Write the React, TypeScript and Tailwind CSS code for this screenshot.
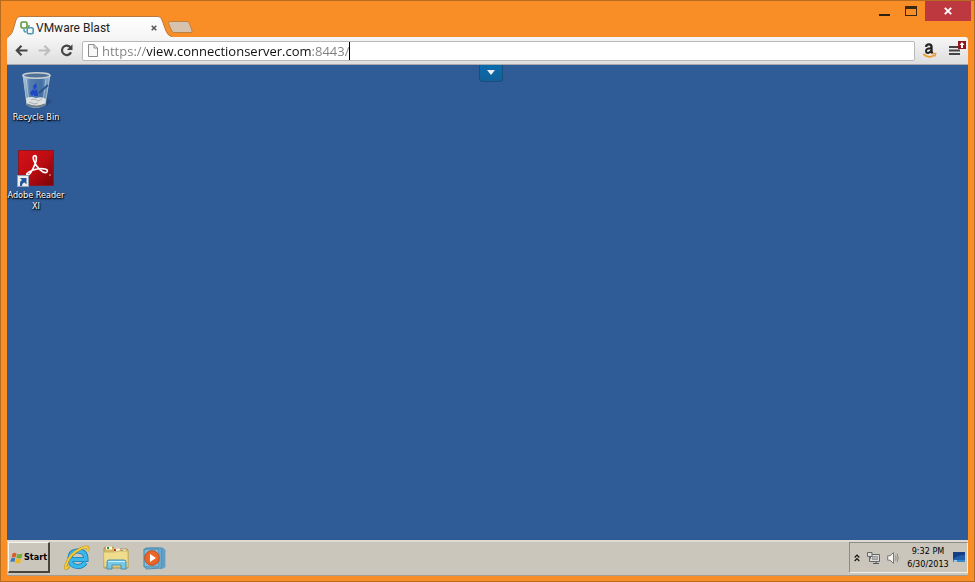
import React from "react";

const uiFont = "font-['Roboto','Open_Sans',sans-serif]";
const desktopFont = "font-['DejaVu_Sans_Condensed','DejaVu_Sans',sans-serif]";

function BlastLogo() {
  return (
    <svg className="size-[14px] shrink-0" viewBox="0 0 14 14" fill="none" aria-hidden="true">
      <rect x="1" y="1" width="6" height="6" rx="1.5" stroke="#5c9a3c" strokeWidth="1.6" />
      <path d="M9 4 V5 Q9 6 8 6" stroke="#5c9a3c" strokeWidth="1.3" />
      <path d="M4 8 V9 Q4 11 6 11" stroke="#4b98b8" strokeWidth="1.4" />
      <rect x="7.2" y="6.8" width="6" height="6" rx="1.5" stroke="#4b98b8" strokeWidth="1.6" />
    </svg>
  );
}

function BrowserTab() {
  return (
    <div className="relative flex h-[21px] w-[164px] items-center pl-[12px] pr-[14px]">
      <svg className="absolute inset-0 size-full" viewBox="0 0 164 21" preserveAspectRatio="none" aria-hidden="true">
        <defs>
          <linearGradient id="tab" x1="0" y1="0" x2="0" y2="1">
            <stop offset="0" stopColor="#fff" />
            <stop offset="1" stopColor="#f5f5f5" />
          </linearGradient>
        </defs>
        <path d="M0 21 C3 19 4 17 5 14 L8 4 Q9 .5 12 .5 H150 Q153 .5 154 4 L158 15 Q160 20 164 21Z" fill="url(#tab)" />
        <path d="M0 20.5 C3 19 4 17 5 14 L8 4 Q9 .5 12 .5 H150 Q153 .5 154 4 L158 15 Q160 20 164 20.5" fill="none" stroke="#b9793c" />
      </svg>
      <div className="relative flex w-full items-center gap-[2px] pt-[2px]">
        <BlastLogo />
        <span className="grow whitespace-nowrap text-[12px] leading-[16px] text-[#222]">VMware Blast</span>
        <button type="button" aria-label="Close tab" className="flex size-[8px] items-center justify-center">
          <svg viewBox="0 0 6 6" className="size-[6px]" aria-hidden="true">
            <path d="M.7 .7 5.3 5.3M5.3 .7 .7 5.3" stroke="#555" strokeWidth="1.5" />
          </svg>
        </button>
      </div>
    </div>
  );
}

function WindowControls() {
  return (
    <div className="ml-auto mr-[3px] flex h-[20px] items-start">
      <button type="button" aria-label="Minimize" className="flex h-[20px] w-[26px] justify-center pt-[13px]">
        <span className="h-[2px] w-[11px] bg-[#2b2115]" />
      </button>
      <button type="button" aria-label="Maximize" className="flex h-[20px] w-[28px] justify-center pt-[5px]">
        <span className="h-[10px] w-[12px] border border-t-[3px] border-[#3a2812]" />
      </button>
      <button type="button" aria-label="Close" className="flex h-[20px] w-[46px] items-center justify-center bg-[#be3840]">
        <svg viewBox="0 0 8 8" className="size-[8px]" aria-hidden="true">
          <path d="M.8 .8 7.2 7.2M7.2 .8 .8 7.2" stroke="#fff" strokeWidth="1.9" />
        </svg>
      </button>
    </div>
  );
}

function TitleBar() {
  return (
    <header className="flex h-[36px] items-start">
      <div className="flex items-end self-end pl-[7px]">
        <BrowserTab />
        <button type="button" aria-label="New tab" className="mb-[3px] ml-[-5px] h-[14px] w-[26px]">
          <svg viewBox="0 0 26 14" className="h-[14px] w-[26px]" aria-hidden="true">
            <path d="M3 1.5 H20 Q21.5 1.5 22.2 3 L25 10.5 Q25.4 12.5 24 12.5 H7 Q5.5 12.5 4.8 11 L1.5 3.5 Q1 1.5 3 1.5Z" fill="#d6c2ad" stroke="#bd8245" />
          </svg>
        </button>
      </div>
      <WindowControls />
    </header>
  );
}

function Toolbar() {
  return (
    <nav className="mx-[6px] flex h-[28px] items-center rounded-t-[3px] border-b border-[#a8a8a8] bg-linear-to-b from-[#f6f6f6] to-[#dedede] pl-[8px]">
      <button type="button" aria-label="Back" className="size-[13px]">
        <svg viewBox="0 0 13 13" aria-hidden="true" fill="none" stroke="#444" strokeWidth="2.1">
          <path d="M6.5 1.8 1.8 6.5 6.5 11.2M2 6.5H12.5" />
        </svg>
      </button>
      <button type="button" aria-label="Forward" className="ml-[10px] size-[13px]">
        <svg viewBox="0 0 13 13" aria-hidden="true" fill="none" stroke="#bdbdbd" strokeWidth="2.1">
          <path d="M6.5 1.8 11.2 6.5 6.5 11.2M11 6.5H.5" />
        </svg>
      </button>
      <button type="button" aria-label="Reload" className="ml-[9px] size-[13px]">
        <svg viewBox="0 0 13 13" aria-hidden="true">
          <path d="M10.6 3.7 A4.7 4.7 0 1 0 11 8.2" fill="none" stroke="#444" strokeWidth="2.2" />
          <path d="M12.5 .3 V6 H6.8Z" fill="#444" />
        </svg>
      </button>
      <div className="ml-[9px] flex h-[20px] min-w-0 grow items-center rounded-[2px] border border-[#b9b9b9] bg-white pl-[5px]">
        <svg viewBox="0 0 10 13" className="mr-[4px] h-[13px] w-[10px] shrink-0" fill="#f7f7f7" stroke="#8b8b8b" aria-hidden="true">
          <path d="M.5 .5H6L9.5 4V12.5H.5ZM6 .5V4H9.5" />
        </svg>
        <input
          type="text"
          aria-label="Address"
          defaultValue="https://view.connectionserver.com:8443/"
          className="h-[18px] field-sizing-content bg-[linear-gradient(90deg,#808080_44px,#111_44px,#111_209px,#808080_209px)] bg-clip-text font-['Open_Sans','Noto_Sans',sans-serif] text-[13px] leading-[18px] text-transparent outline-none"
        />
        <span className="h-[18px] w-[1px] bg-black" />
      </div>
      <button type="button" aria-label="Amazon" className="ml-[7px] h-[17px] w-[15px]">
        <svg viewBox="0 0 15 17" aria-hidden="true" fill="none">
          <path d="M4 4.8 Q4.3 2.3 7 2.3 Q9.5 2.3 9.5 4.8 V9 Q9.5 10.5 10.8 11.2" stroke="#222" strokeWidth="2.3" />
          <path d="M9.3 6.3 Q4 6.2 4 8.9 Q4 10.9 6 10.9 Q8.5 10.7 9.4 8.5" stroke="#222" strokeWidth="2" />
          <path d="M1.2 12 Q7 17 12.5 13" stroke="#ee9b2e" strokeWidth="1.7" />
          <path d="M10.5 11.7 13.8 11.5 13 14.7" stroke="#ee9b2e" strokeWidth="1.2" />
        </svg>
      </button>
      <button type="button" aria-label="Menu, update available" className="mb-[4px] ml-[11px] mr-[1px] h-[18px] w-[19px]">
        <svg viewBox="0 0 19 18" className="h-[18px] w-[19px]" aria-hidden="true">
          <path d="M1 7H11M1 10.5H12M1 14H12" stroke="#444" strokeWidth="2.2" />
          <rect x="10" y="1" width="8" height="8" fill="#8f1719" />
          <path d="M14 2 16.5 5H15V8H13V5H11.5Z" fill="#fff" />
        </svg>
      </button>
    </nav>
  );
}

function RecycleBinIcon() {
  return (
    <svg viewBox="0 0 36 38" className="h-[38px] w-[36px]" aria-hidden="true">
      <defs>
        <linearGradient id="glass" x1="0" x2="1">
          <stop offset="0" stopColor="#b9cfe0" />
          <stop offset=".25" stopColor="#547dac" />
          <stop offset=".7" stopColor="#426fa5" />
          <stop offset="1" stopColor="#9fb9d0" />
        </linearGradient>
      </defs>
      <path d="M9 33 28 35 34 31 29 26Z" fill="#264978" opacity=".6" />
      <path d="M5 4 9 34 Q17 39 27 34 L32 4Z" fill="url(#glass)" stroke="#a8bdce" />
      <path d="M8 27 Q13 25 18 27 Q24 25 28 28 L27 33 Q18 38 9 33Z" fill="#dce0e0" />
      <path d="M13 29 17 28 20 30 24 28M11 31 16 33 20 32" fill="none" stroke="#a7b1b6" />
      <path d="M15 15 18 12 19 16 16 19ZM12 22 15 18 17 22 14 25ZM16 20 19 18 20 25 16 25Z" fill="#1e48c4" />
      <path d="M8 7 11 31M28 8 25 31" stroke="#d1e1ec" opacity=".6" />
      <path d="M30 14 21 22" stroke="#2b568d" strokeWidth="2" />
      <ellipse cx="18.5" cy="4.5" rx="13.5" ry="2.7" fill="#527198" stroke="#c8cfcf" strokeWidth="1.5" />
      <path d="M9 33.5 Q18 37.5 27 33.5" fill="none" stroke="#737f88" strokeWidth="2" />
    </svg>
  );
}

function AdobeReaderIcon() {
  return (
    <svg viewBox="0 0 38 38" className="size-[38px]" aria-hidden="true">
      <defs>
        <linearGradient id="red" x1="0" y1="0" x2="1" y2="1">
          <stop offset="0" stopColor="#d51218" />
          <stop offset=".5" stopColor="#bd0c12" />
          <stop offset="1" stopColor="#760408" />
        </linearGradient>
      </defs>
      <rect x="1.5" y="1.5" width="35" height="35" fill="url(#red)" stroke="#861923" />
      <path d="M17 7 C20 5 20 11 18 15 C16 20 13 26 11 26 C7 26 13 21 20 20 C26 19 32 20 30 23 C27 26 19 18 17 12 C16 9 16 7 17 7Z" fill="none" stroke="#fff" strokeWidth="1.7" />
      <circle cx="33" cy="26" r=".7" fill="#fff" />
      <rect x=".5" y="26.5" width="11" height="11" fill="#eee" stroke="#91a3b8" />
      <path d="M3 37 V34 Q3 32 5 31 L3 29H9.5V35.5L7.5 33.5Q5 34 5 37Z" fill="#24569b" />
    </svg>
  );
}

function DesktopIcon({ label, children }: { label: string; children: React.ReactNode }) {
  return (
    <button type="button" className="flex w-[58px] flex-col items-center gap-[3px] text-center text-[9px] leading-[11px] text-white text-shadow-[1px_1px_1px_#000,0_1px_2px_#000]">
      {children}
      <span>{label}</span>
    </button>
  );
}

function Desktop() {
  return (
    <main className={`relative mx-[6px] grow bg-[#2f5b96] ${desktopFont}`}>
      <div className="flex w-[58px] flex-col gap-[26px] pt-[6px]">
        <DesktopIcon label="Recycle Bin"><RecycleBinIcon /></DesktopIcon>
        <DesktopIcon label="Adobe Reader XI"><AdobeReaderIcon /></DesktopIcon>
      </div>
      <button type="button" aria-label="Show session menu" className="absolute left-1/2 top-0 flex h-[17px] w-[24px] -translate-x-[9px] items-center justify-center rounded-b-[4px] border border-t-0 border-[#194e78] bg-linear-to-b from-[#086bae] to-[#126198] pb-[2px]">
        <svg viewBox="0 0 8 5" className="h-[5px] w-[8px]" aria-hidden="true"><path d="M0 0H8L4 5Z" fill="#eee" /></svg>
      </button>
    </main>
  );
}

function WindowsFlag() {
  return (
    <svg viewBox="0 0 13 12" className="h-[12px] w-[13px] shrink-0" aria-hidden="true">
      <path d="M2.5 1.5Q4.5 0 6.5 1.5L5.5 5.5Q3.5 4.5 1.5 5.5Z" fill="#df592c" />
      <path d="M7.2 1.8Q9.5 3 12.5 1.5L11.5 6Q9 7 6.2 5.7Z" fill="#72ac35" />
      <path d="M1.3 6.2Q3.2 5.2 5.3 6.2L4.3 10Q2.5 9 .3 10Z" fill="#397abd" />
      <path d="M6 6.5Q8.5 7.5 11.3 6.7L10.2 11Q7.5 12 5 10.5Z" fill="#edb728" />
    </svg>
  );
}

function ExplorerIcon() {
  return (
    <svg viewBox="0 0 26 26" className="size-[26px]" aria-hidden="true">
      <path d="M21.5 17.5 Q18 22 13.5 21.5 Q6 21 6 14 Q6 6 14 6 Q22 6 22 14.5 H8" fill="none" stroke="#147db7" strokeWidth="5" />
      <path d="M21.5 17.5 Q18 22 13.5 21.5 Q6 21 6 14 Q6 6 14 6 Q22 6 22 14.5 H8" fill="none" stroke="#39b9eb" strokeWidth="3.5" />
      <path d="M5 21 Q0 27 2 20 Q5 9 18 3 Q26 0 23.5 6" fill="none" stroke="#b18b24" strokeWidth="2.8" />
      <path d="M5 21 Q0 27 2 20 Q5 9 18 3 Q26 0 23.5 6" fill="none" stroke="#f8ce35" strokeWidth="1.9" />
    </svg>
  );
}

function FolderIcon() {
  return (
    <svg viewBox="0 0 26 26" className="size-[26px]" aria-hidden="true">
      <path d="M1 4 Q1 2 3 2H10L12 4H23Q25 4 25 6V23H1Z" fill="#d6b65e" stroke="#aa9150" />
      <path d="M3 3H9M11 5H17M18 6H23" stroke="#fffae0" strokeWidth="3" />
      <path d="M4 3H6" stroke="#28963f" strokeWidth="2" />
      <path d="M11 5H13" stroke="#b9322d" strokeWidth="2" />
      <path d="M18 6H20" stroke="#367fc2" strokeWidth="2" />
      <path d="M.5 7H13L15 6H25V22H1Z" fill="#f0dc8d" stroke="#cbb566" />
      <path d="M4 24V17Q4 15 6 15H21Q23 15 23 17V24H18V20H9V24Z" fill="#77c8e6" stroke="#4290b4" />
      <path d="M5 16.5H22" stroke="#c7f1fc" />
    </svg>
  );
}

function MediaPlayerIcon() {
  return (
    <svg viewBox="0 0 24 24" className="size-[24px]" aria-hidden="true">
      <path d="M7 2H21L23 4V21L19 23Z" fill="#5b9fca" stroke="#6ba3c1" />
      <path d="M4 2H19V22L4 23Z" fill="#91c9e6" stroke="#518bac" />
      <path d="M2 3H17V21H2Z" fill="#7bbbdc" stroke="#4583a4" />
      <circle cx="10" cy="12" r="7.3" fill="#ed6426" stroke="#c84b17" />
      <path d="M8 8 14 12 8 16Z" fill="#fff" />
    </svg>
  );
}

function Tray() {
  return (
    <div className="ml-auto flex h-[31px] items-center border border-[#8e8b84] border-r-[#f1eee8] border-b-[#f1eee8] pl-[4px]">
      <button type="button" aria-label="Show hidden icons" className="h-[8px] w-[6px]">
        <svg viewBox="0 0 6 8" fill="none" stroke="#111" strokeWidth="1.2" aria-hidden="true"><path d="M.7 3.5 3 1.2 5.3 3.5M.7 7 3 4.7 5.3 7" /></svg>
      </button>
      <button type="button" aria-label="Network" className="ml-[7px] size-[14px]">
        <svg viewBox="0 0 14 14" fill="none" aria-hidden="true">
          <path d="M3.5 3.5H12.5V10.5H3.5Z" fill="#ddd" stroke="#666" />
          <path d="M5.5 5.5H10.5V8.5H5.5Z" fill="#b5b5b5" stroke="#999" />
          <path d="M6 12.5H12M9 11V12" stroke="#555" />
          <path d="M.5 1.5H5V5.5H.5ZM2.5 6V10.5H5" fill="#ddd" stroke="#666" />
        </svg>
      </button>
      <button type="button" aria-label="Volume" className="ml-[6px] size-[12px]">
        <svg viewBox="0 0 12 12" fill="none" aria-hidden="true">
          <path d="M.7 3.8H3L6.5 .7V11.3L3 8.2H.7Z" fill="#f5f5f5" stroke="#777" />
          <path d="M8.5 3.5Q9.8 6 8.5 8.5M10 1.8Q12.5 6 10 10.2" stroke="#888" />
        </svg>
      </button>
      <time dateTime="2013-06-30T21:32" className="ml-[7px] w-[44px] text-center text-[9px] leading-[13px] whitespace-nowrap text-black">
        9:32 PM<br />6/30/2013
      </time>
      <button type="button" aria-label="Show desktop" className="ml-[3px] mr-[2px] h-[11px] w-[12px]">
        <svg viewBox="0 0 12 11" aria-hidden="true">
          <rect width="12" height="9" fill="#245fac" /><path d="M0 0H12V3Q5 3 0 7Z" fill="#173f86" /><path d="M0 8H12V10H0Z" fill="#3889cb" /><path d="M1 9H4" stroke="#fff" />
        </svg>
      </button>
    </div>
  );
}

function Taskbar() {
  return (
    <footer className={`mx-[6px] mb-[5px] flex h-[36px] items-center border-t-2 border-b border-t-[#dedbd4] border-b-[#a49a8c] bg-[#cbc6bb] pb-[2px] pl-[1px] ${desktopFont}`}>
      <button type="button" className="flex h-[31px] w-[42px] items-center justify-center gap-[1px] border border-[#f6f5f0] border-r-2 border-r-[#48453f] border-b-2 border-b-[#48453f] pt-[2px] text-[9px] font-bold text-black">
        <WindowsFlag />Start
      </button>
      <div className="ml-[14px] flex items-center gap-[13px]">
        <button type="button" aria-label="Internet Explorer"><ExplorerIcon /></button>
        <button type="button" aria-label="Windows Explorer"><FolderIcon /></button>
        <button type="button" aria-label="Windows Media Player"><MediaPlayerIcon /></button>
      </div>
      <Tray />
    </footer>
  );
}

export default function App() {
  return (
    <div className={`flex min-h-screen flex-col border border-[#b46c20] bg-[#f98e27] ${uiFont}`}>
      <TitleBar />
      <Toolbar />
      <Desktop />
      <Taskbar />
    </div>
  );
}
